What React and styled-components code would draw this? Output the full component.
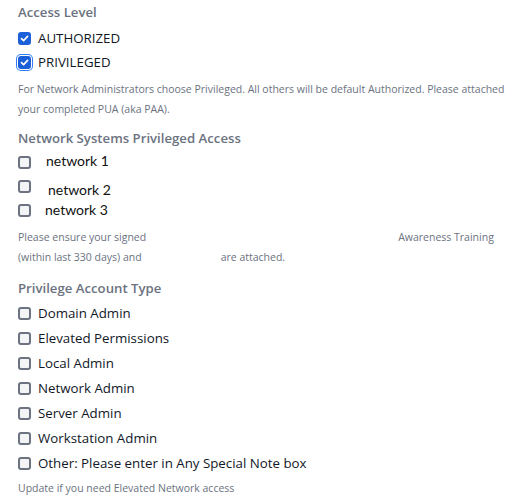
import React from 'react'
import styled, { createGlobalStyle } from 'styled-components'

const GlobalStyle = createGlobalStyle`
  body {
    margin: 0;
    background: #ffffff;
    font-family: 'Open Sans', 'Noto Sans', sans-serif;
  }
`

const Form = styled.div`
  padding: 2px 18px 0 18px;
  width: 523px;
  box-sizing: border-box;
`

const Section = styled.section`
  display: flex;
  flex-direction: column;
`

const Heading = styled.div`
  font-size: 13.2px;
  font-weight: 600;
  color: #6b7280;
  line-height: 20px;
  margin-top: ${({ top }) => top || 0}px;
`

const OptionList = styled.div`
  display: flex;
  flex-direction: column;
  gap: ${({ gap }) => gap || 5}px;
  margin-top: ${({ top }) => top || 4}px;
`

const Option = styled.label`
  display: flex;
  align-items: center;
  gap: 7px;
  height: 20px;
  font-size: 13.3px;
  color: #111827;
`

const Box = styled.span`
  width: 13px;
  height: 13px;
  box-sizing: border-box;
  border-radius: 3px;
  flex: none;
  display: flex;
  align-items: center;
  justify-content: center;
  border: 2px solid ${({ checked }) => (checked ? '#1b5fd9' : '#6b7280')};
  background: ${({ checked }) => (checked ? '#1b5fd9' : '#f3f4f6')};
  box-shadow: ${({ focused }) =>
    focused ? '0 0 0 1px #ffffff, 0 0 0 2px #2f7cf6' : 'none'};
`

const NetLabel = styled.span`
  font-family: 'Lato', 'Liberation Sans', sans-serif;
  font-size: 14px;
  color: #111111;
  margin-left: ${({ shift }) => shift}px;
  position: relative;
  top: ${({ nudge }) => nudge || 0}px;
`

const Help = styled.p`
  margin: ${({ top }) => top || 0}px 0 0 0;
  font-size: 10.5px;
  line-height: ${({ lh }) => lh || 19}px;
  color: #6b7280;
  white-space: nowrap;
`

const Blank = styled.span`
  display: inline-block;
  width: ${({ w }) => w}px;
`

const Check = () => (
  <svg width="9" height="9" viewBox="0 0 9 9">
    <path
      d="M1.5 4.6 L3.6 6.6 L7.6 2.4"
      fill="none"
      stroke="#ffffff"
      strokeWidth="1.7"
      strokeLinecap="round"
      strokeLinejoin="round"
    />
  </svg>
)

const CheckItem = ({ label, checked, focused }) => (
  <Option>
    <Box checked={checked} focused={focused}>
      {checked && <Check />}
    </Box>
    {label}
  </Option>
)

const networks = [
  { name: 'network 1', shift: 8, nudge: -2 },
  { name: 'network 2', shift: 10, nudge: 3 },
  { name: 'network 3', shift: 7, nudge: -1 },
]

const accountTypes = [
  'Domain Admin',
  'Elevated Permissions',
  'Local Admin',
  'Network Admin',
  'Server Admin',
  'Workstation Admin',
  'Other: Please enter in Any Special Note box',
]

export default function App() {
  return (
    <>
      <GlobalStyle />
      <Form>
        <Section>
          <Heading>Access Level</Heading>
          <OptionList gap={4} top={6}>
            <CheckItem label="AUTHORIZED" checked />
            <CheckItem label="PRIVILEGED" checked focused />
          </OptionList>
          <Help top={7} lh={20}>
            For Network Administrators choose Privileged. All others will be default
            Authorized. Please attached
            <br />
            your completed PUA (aka PAA).
          </Help>
        </Section>

        <Section>
          <Heading top={9}>Network Systems Privileged Access</Heading>
          <OptionList gap={4}>
            {networks.map((n) => (
              <Option key={n.name}>
                <Box />
                <NetLabel shift={n.shift} nudge={n.nudge}>
                  {n.name}
                </NetLabel>
              </Option>
            ))}
          </OptionList>
          <Help top={7} lh={20}>
            Please ensure your signed
            <Blank w={252} />
            Awareness Training
            <br />
            (within last 330 days) and
            <Blank w={79} />
            are attached.
          </Help>
        </Section>

        <Section>
          <Heading top={11}>Privilege Account Type</Heading>
          <OptionList top={5}>
            {accountTypes.map((t) => (
              <CheckItem key={t} label={t} />
            ))}
          </OptionList>
          <Help top={6}>Update if you need Elevated Network access</Help>
        </Section>
      </Form>
    </>
  )
}
